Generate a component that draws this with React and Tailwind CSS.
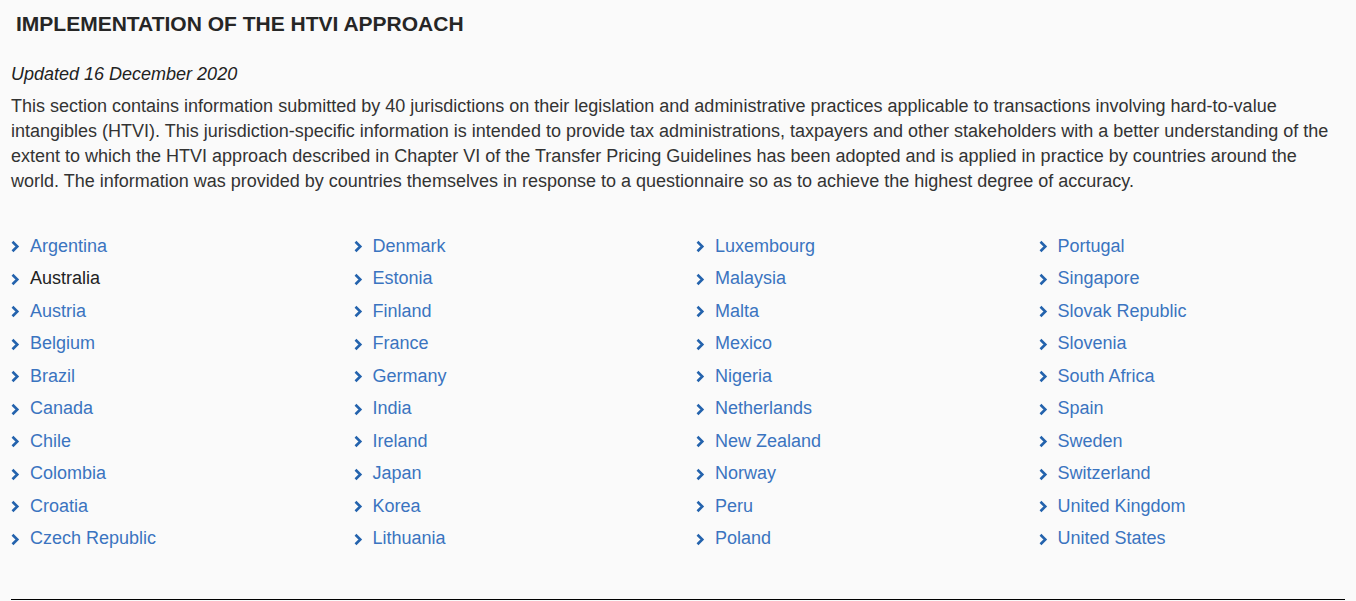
import React from 'react';

const columns = [
  ['Argentina', 'Australia', 'Austria', 'Belgium', 'Brazil', 'Canada', 'Chile', 'Colombia', 'Croatia', 'Czech Republic'],
  ['Denmark', 'Estonia', 'Finland', 'France', 'Germany', 'India', 'Ireland', 'Japan', 'Korea', 'Lithuania'],
  ['Luxembourg', 'Malaysia', 'Malta', 'Mexico', 'Nigeria', 'Netherlands', 'New Zealand', 'Norway', 'Peru', 'Poland'],
  ['Portugal', 'Singapore', 'Slovak Republic', 'Slovenia', 'South Africa', 'Spain', 'Sweden', 'Switzerland', 'United Kingdom', 'United States'],
];

const Chevron = () => (
  <svg width="9" height="13" viewBox="0 0 9 13" className="shrink-0 mt-[1px]">
    <path d="M1.5 1.8 L6.3 6.5 L1.5 11.2" fill="none" stroke="#2463ad" strokeWidth="2.6" />
  </svg>
);

const CountryItem = ({ name }) => (
  <li className="flex items-center h-[32.5px]">
    <Chevron />
    <a
      href="#"
      className={`ml-[10px] ${name === 'Australia' ? 'text-[#222]' : 'text-[#3a74c0]'}`}
    >
      {name}
    </a>
  </li>
);

const App = () => {
  return (
    <div
      className="min-h-[601px] bg-[#fafafa] text-[#333] overflow-hidden"
      style={{ fontFamily: '"Liberation Sans", Arial, sans-serif' }}
    >
      <div className="pl-[11px] w-[1345px]">
        <h2 className="pl-[5px] pt-[11px] text-[21px] font-bold leading-[26px] text-[#262626]">
          IMPLEMENTATION OF THE HTVI APPROACH
        </h2>
        <p className="mt-[25px] text-[18px] italic leading-[25px] text-[#222]">Updated 16 December 2020</p>
        <p className="mt-[7px] text-[18px] leading-[25px] pr-[10px]">
          This section contains information submitted by 40 jurisdictions on their legislation and administrative practices applicable to transactions involving hard-to-value intangibles (HTVI). This jurisdiction-specific information is intended to provide tax administrations, taxpayers and other stakeholders with a better understanding of the extent to which the HTVI approach described in Chapter VI of the Transfer Pricing Guidelines has been adopted and is applied in practice by countries around the world. The information was provided by countries themselves in response to a questionnaire so as to achieve the highest degree of accuracy.
        </p>
        <div className="mt-[36px] grid grid-cols-[repeat(4,342.5px)] text-[18px]">
          {columns.map((col, i) => (
            <ul key={i}>
              {col.map((name) => (
                <CountryItem key={name} name={name} />
              ))}
            </ul>
          ))}
        </div>
        <div className="mt-[44px] border-t border-black" />
      </div>
    </div>
  );
};

export default App;
